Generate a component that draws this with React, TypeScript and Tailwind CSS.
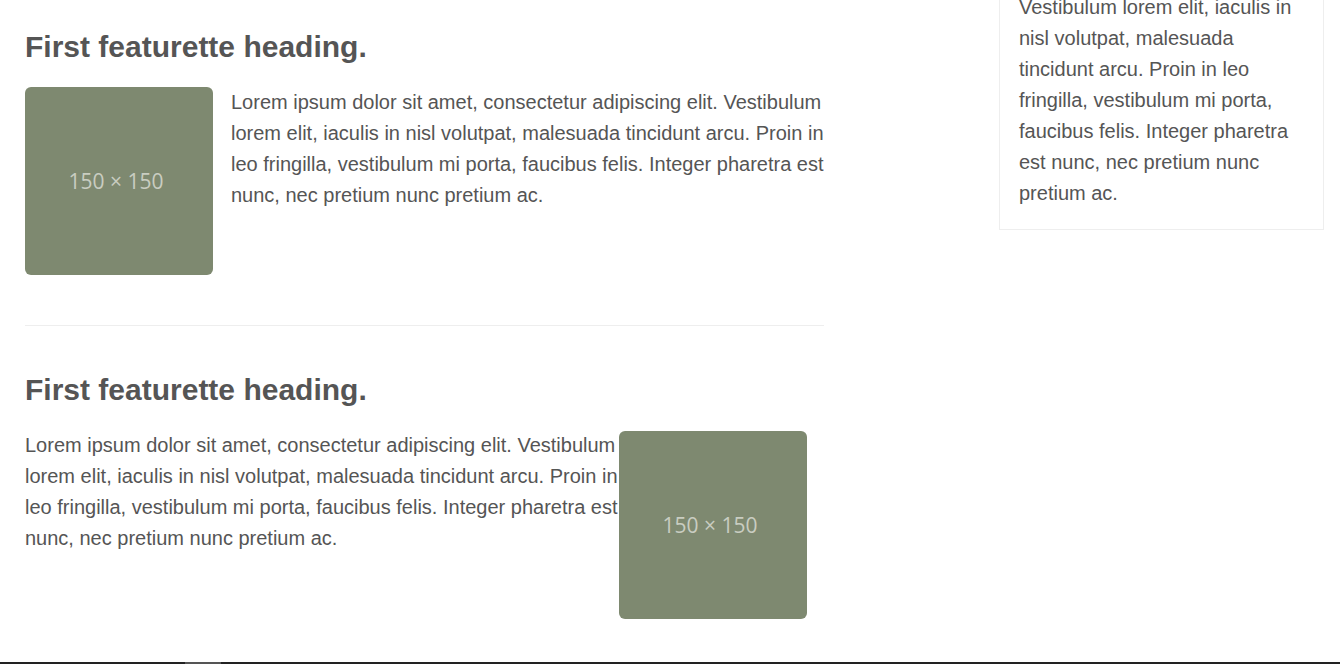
import React from "react";

const TEXT =
  "Lorem ipsum dolor sit amet, consectetur adipiscing elit. Vestibulum lorem elit, iaculis in nisl volutpat, malesuada tincidunt arcu. Proin in leo fringilla, vestibulum mi porta, faucibus felis. Integer pharetra est nunc, nec pretium nunc pretium ac.";

function Placeholder({ className = "" }: { className?: string }) {
  return (
    <div
      className={
        "w-[188px] h-[188px] shrink-0 rounded-[6px] bg-[#7e8970] flex items-center justify-center pr-[6px] pt-[2px] text-[#c9cdc1] text-[21px] " +
        className
      }
      style={{ fontFamily: '"Open Sans", "Noto Sans", sans-serif' }}
    >
      150 × 150
    </div>
  );
}

export default function App() {
  return (
    <div
      className="h-[664px] w-[1340px] overflow-hidden flex flex-col bg-white text-[#555]"
      style={{ fontFamily: '"Liberation Sans", Arial, sans-serif' }}
    >
      <div className="flex-1 flex pl-[25px] overflow-hidden">
        <div className="w-[799px] shrink-0">
          <h2 className="mt-[30px] mb-[24px] text-[30px] leading-[33px] font-bold text-[#555]">
            First featurette heading.
          </h2>
          <div className="flex">
            <Placeholder className="mr-[18px]" />
            <p className="flex-1 text-[20px] leading-[31px]">{TEXT}</p>
          </div>
          <hr className="mt-[50px] border-0 border-t border-[#eeeeee]" />
          <h2 className="mt-[47px] mb-[24px] text-[30px] leading-[33px] font-bold text-[#555]">
            First featurette heading.
          </h2>
          <div className="flex">
            <p className="flex-1 text-[20px] leading-[31px]">{TEXT}</p>
            <Placeholder className="mr-[17px] mt-[1px]" />
          </div>
        </div>
        <div className="ml-[175px] w-[325px] shrink-0 self-start mt-[-91px] border border-[#eeeeee] py-[20px] px-[19px]">
          <p className="text-[20px] leading-[31px]">{TEXT}</p>
        </div>
      </div>
      <div className="h-[2px] bg-[#222] shrink-0 flex">
        <div className="ml-[185px] w-[36px] bg-[#555]" />
      </div>
    </div>
  );
}
